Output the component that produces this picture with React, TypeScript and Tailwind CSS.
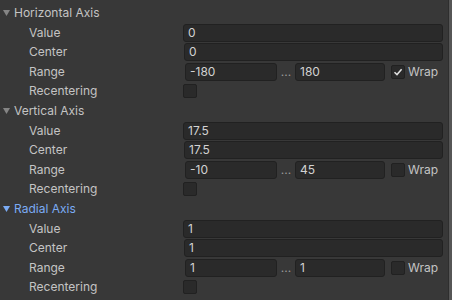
import React from 'react';

interface AxisProps {
  title: string;
  active?: boolean;
  value: string;
  center: string;
  min: string;
  max: string;
  wrap: boolean;
}

function Field({ text, className = '' }: { text: string; className?: string }) {
  return (
    <div
      className={`h-[18px] rounded-[3px] border border-[#212121] bg-[#2a2a2a] pl-[4px] text-[12px] leading-[16px] text-[#d2d2d2] ${className}`}
    >
      {text}
    </div>
  );
}

function Checkbox({ checked }: { checked: boolean }) {
  return (
    <div className="flex h-[14px] w-[14px] shrink-0 items-center justify-center rounded-[2px] border border-[#212121] bg-[#2a2a2a]">
      {checked && (
        <svg width="10" height="10" viewBox="0 0 10 10">
          <path d="M1.5 5.2 L4 7.6 L8.6 2.2" fill="none" stroke="#e0e0e0" strokeWidth="1.5" />
        </svg>
      )}
    </div>
  );
}

function Row({ label, children }: { label: string; children: React.ReactNode }) {
  return (
    <div className="flex h-[19.5px] items-center">
      <div className="w-[183px] shrink-0 pl-[29px] text-[12px] text-[#c4c4c4]">{label}</div>
      <div className="flex min-w-0 flex-1 items-center">{children}</div>
    </div>
  );
}

function Axis({ title, active, value, center, min, max, wrap }: AxisProps) {
  const color = active ? '#7babf4' : '#c4c4c4';
  return (
    <div>
      <div className="flex h-[20px] items-center">
        <svg width="14" height="10" viewBox="0 0 14 10" className="shrink-0">
          <polygon points="3,2 10,2 6.5,8" fill={active ? '#7babf4' : '#858585'} />
        </svg>
        <span className="text-[12px]" style={{ color }}>
          {title}
        </span>
      </div>
      <Row label="Value">
        <Field text={value} className="flex-1" />
      </Row>
      <Row label="Center">
        <Field text={center} className="ml-[1px] flex-1" />
      </Row>
      <Row label="Range">
        <Field text={min} className="ml-[2px] w-[92px] shrink-0" />
        <div className="w-[18px] shrink-0 text-center text-[12px] text-[#9a9a9a]">...</div>
        <Field text={max} className="w-[90px] shrink-0" />
        <div className="ml-[6px]">
          <Checkbox checked={wrap} />
        </div>
        <span className="ml-[3px] text-[12px] text-[#c4c4c4]">Wrap</span>
      </Row>
      <Row label="Recentering">
        <Checkbox checked={false} />
      </Row>
    </div>
  );
}

export default function App() {
  return (
    <div
      className="flex h-[300px] w-[452px] overflow-hidden bg-[#383838]"
      style={{ fontFamily: 'Inter, "Noto Sans", sans-serif' }}
    >
      <div className="min-w-0 flex-1 pr-[5px] pt-[3px]">
        <Axis title="Horizontal Axis" value="0" center="0" min="-180" max="180" wrap />
        <Axis title="Vertical Axis" value="17.5" center="17.5" min="-10" max="45" wrap={false} />
        <Axis title="Radial Axis" active value="1" center="1" min="1" max="1" wrap={false} />
      </div>
      <div className="w-[4px] shrink-0 border-l border-[#2e2e2e] bg-[#565656]" />
    </div>
  );
}
